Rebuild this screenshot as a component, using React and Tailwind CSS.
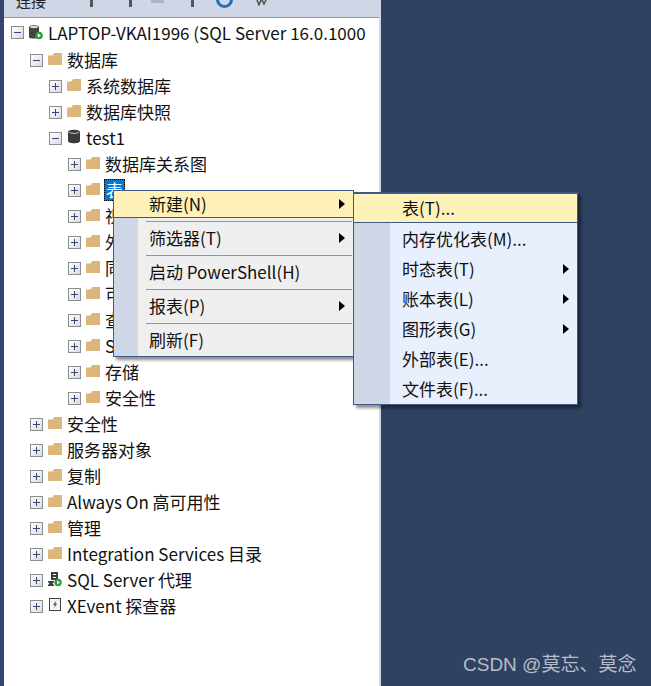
import React from "react";

const FONT = { fontFamily: '"Noto Sans CJK SC", "Open Sans", sans-serif' };

function Expander({ open }) {
  return (
    <span className="w-[13px] h-[13px] shrink-0 border border-[#8d8d8d] bg-gradient-to-br from-white to-[#dcdcdc] relative block">
      <span className="absolute left-[2px] right-[2px] top-[5px] h-px bg-[#2f4a7c]" />
      {!open && <span className="absolute top-[2px] bottom-[2px] left-[5px] w-px bg-[#2f4a7c]" />}
    </span>
  );
}

function Folder() {
  return (
    <svg width="14" height="12" viewBox="0 0 14 12" className="shrink-0 block">
      <path d="M0 2.5 L0 12 L14 12 L14 0 L6 0 L4.5 2.5 Z" fill="#dcb67a" />
    </svg>
  );
}

function Server() {
  return (
    <svg width="16" height="16" viewBox="0 0 16 16" className="shrink-0 block">
      <path d="M1 3 C1 0.5 11 0.5 11 3 L11 13 C11 15 1 15 1 13 Z" fill="#424242" />
      <ellipse cx="6" cy="3" rx="4" ry="1.2" fill="#d8d8d8" />
      <circle cx="11" cy="11.5" r="3.8" fill="#2e9a3c" />
      <path d="M9.8 9.5 L13 11.5 L9.8 13.5 Z" fill="#fff" />
    </svg>
  );
}

function Db() {
  return (
    <svg width="14" height="15" viewBox="0 0 14 15" className="shrink-0 block">
      <path d="M1 3 C1 0 13 0 13 3 L13 12 C13 15 1 15 1 12 Z" fill="#3a3a3a" />
      <path d="M2 3.2 C4 4.8 10 4.8 12 3.2" fill="none" stroke="#e8e8e8" strokeWidth="0.8" />
    </svg>
  );
}

function Agent() {
  return (
    <svg width="14" height="16" viewBox="0 0 14 16" className="shrink-0 block">
      <rect x="3" y="1" width="7" height="8" fill="#3c3c3c" />
      <rect x="5" y="3" width="3" height="1" fill="#fff" />
      <rect x="5" y="6" width="3" height="1" fill="#fff" />
      <path d="M0 10 H6 V11 L4.5 12.5 L6 14 V15 H0 V14 L1.5 12.5 L0 11 Z" fill="#3c3c3c" />
      <circle cx="10" cy="11.5" r="3.7" fill="#2e9a3c" />
      <path d="M9 9.6 L12 11.5 L9 13.4 Z" fill="#fff" />
    </svg>
  );
}

function XEvent() {
  return (
    <svg width="12" height="13" viewBox="0 0 12 13" className="shrink-0 block">
      <rect x="0.5" y="0.5" width="11" height="12" fill="#f4f4f4" stroke="#424242" />
      <path d="M7.5 2.5 L4 6.8 H6 L4.8 10 L8.2 5.8 H6.2 Z" fill="#424242" />
    </svg>
  );
}

function Row({ depth, open, icon, children, selected }) {
  return (
    <div className="h-[26px] flex items-center whitespace-nowrap" style={{ paddingLeft: 7 + depth * 19 }}>
      <Expander open={open} />
      <span className="w-[23px] flex justify-center items-center -mt-[3px] shrink-0">{icon}</span>
      {selected ? (
        <span className="bg-[#0078d7] text-white border border-dotted border-black leading-[20px] h-[22px] px-px">{children}</span>
      ) : (
        <span className="text-[#111] pl-px">{children}</span>
      )}
    </div>
  );
}

function Arrow() {
  return (
    <span className="absolute right-[8px] top-1/2 -translate-y-1/2 w-0 h-0 border-y-[5px] border-y-transparent border-l-[6px] border-l-black" />
  );
}

function MainItem({ label, arrow, hot }) {
  return (
    <div
      className={
        "relative h-[28px] flex items-center pl-[35px] text-[#111] " +
        (hot ? "bg-[#fff2b8] border border-[#3f5a86] -mx-[1px] -mt-[1px] h-[28px]" : "")
      }
    >
      {label}
      {arrow && <Arrow />}
    </div>
  );
}

function MainSep() {
  return <div className="ml-[32px] mr-[1px] h-px bg-[#8a97ab] my-[2.5px]" />;
}

function SubItem({ label, arrow, hot }) {
  return (
    <div
      className={
        "relative h-[30px] flex items-center pl-[48px] text-[#111] " +
        (hot ? "bg-[#fff2b8] border border-[#3f5a86] -mx-[1px] mb-[1px] pl-[47px]" : "")
      }
    >
      {label}
      {arrow && <Arrow />}
    </div>
  );
}

export default function App() {
  return (
    <div className="relative w-[651px] h-[686px] overflow-hidden bg-[#2f4262] text-[17px]" style={FONT}>
      <div className="w-[381px] h-[686px] flex bg-[#cfd6e5]">
        <div className="w-[4px] bg-[#34466f] shrink-0" />
        <div className="flex-1 min-w-0 flex flex-col">
          <div className="h-[17px] shrink-0 relative overflow-hidden text-[15px] text-[#222] leading-none">
            <span className="absolute left-[12px] -top-[7px]">连接</span>
            <span className="absolute left-[86px] top-0 w-[3px] h-[7px] bg-[#555]" />
            <span className="absolute left-[125px] top-0 w-[3px] h-[7px] bg-[#555]" />
            <span className="absolute left-[147px] top-0 w-[13px] h-[3px] bg-[#aeb4c0]" />
            <span className="absolute left-[187px] top-0 w-[3px] h-[7px] bg-[#555]" />
            <span className="absolute left-[212px] -top-[9px] w-[17px] h-[17px] rounded-full border-[3px] border-[#1e6fb5]" />
            <svg width="14" height="6" viewBox="0 0 14 6" className="absolute left-[250px] top-0 block">
              <path d="M3 0 L5 5 L7 0 M8 0 L10 4 L12 0" stroke="#555" strokeWidth="1.6" fill="none" />
            </svg>
          </div>
          <div className="flex-1 bg-white mr-[2px] border-t border-[#8a97ab] overflow-hidden">
            <div className="h-[29px] flex items-center pl-[7px] whitespace-nowrap overflow-hidden">
              <Expander open />
              <span className="w-[24px] flex justify-center shrink-0 -mt-[1px]"><Server /></span>
              <span className="text-[#111]">LAPTOP-VKAI1996 (SQL Server 16.0.1000</span>
            </div>
            <Row depth={1} open icon={<Folder />}>数据库</Row>
            <Row depth={2} icon={<Folder />}>系统数据库</Row>
            <Row depth={2} icon={<Folder />}>数据库快照</Row>
            <Row depth={2} open icon={<Db />}>test1</Row>
            <Row depth={3} icon={<Folder />}>数据库关系图</Row>
            <Row depth={3} icon={<Folder />} selected>表</Row>
            <Row depth={3} icon={<Folder />}>视图</Row>
            <Row depth={3} icon={<Folder />}>外部资源</Row>
            <Row depth={3} icon={<Folder />}>同义词</Row>
            <Row depth={3} icon={<Folder />}>可编程性</Row>
            <Row depth={3} icon={<Folder />}>查询存储</Row>
            <Row depth={3} icon={<Folder />}>Service Broker</Row>
            <Row depth={3} icon={<Folder />}>存储</Row>
            <Row depth={3} icon={<Folder />}>安全性</Row>
            <Row depth={1} icon={<Folder />}>安全性</Row>
            <Row depth={1} icon={<Folder />}>服务器对象</Row>
            <Row depth={1} icon={<Folder />}>复制</Row>
            <Row depth={1} icon={<Folder />}>Always On 高可用性</Row>
            <Row depth={1} icon={<Folder />}>管理</Row>
            <Row depth={1} icon={<Folder />}>Integration Services 目录</Row>
            <Row depth={1} icon={<Agent />}>SQL Server 代理</Row>
            <Row depth={1} icon={<XEvent />}>XEvent 探查器</Row>
          </div>
        </div>
      </div>

      <div className="absolute left-[113px] top-[190px] w-[241px] h-[167px] border border-[#3f5a86] bg-[#efefef] shadow-[3px_3px_3px_rgba(0,0,0,0.45)]">
        <div className="absolute left-0 top-0 bottom-0 w-[24px] bg-[#cfd6e5]" />
        <div className="relative">
          <MainItem label="新建(N)" arrow hot />
          <MainSep />
          <MainItem label="筛选器(T)" arrow />
          <MainSep />
          <MainItem label="启动 PowerShell(H)" />
          <MainSep />
          <MainItem label="报表(P)" arrow />
          <MainSep />
          <MainItem label="刷新(F)" />
        </div>
      </div>

      <div className="absolute left-[353px] top-[192px] w-[225px] h-[213px] border border-[#3f5a86] bg-[#e8effd] shadow-[3px_3px_3px_rgba(0,0,0,0.45)]">
        <div className="absolute left-0 top-0 bottom-0 w-[36px] bg-[#cfd6e5]" />
        <div className="relative">
          <SubItem label="表(T)..." hot />
          <SubItem label="内存优化表(M)..." />
          <SubItem label="时态表(T)" arrow />
          <SubItem label="账本表(L)" arrow />
          <SubItem label="图形表(G)" arrow />
          <SubItem label="外部表(E)..." />
          <SubItem label="文件表(F)..." />
        </div>
      </div>

      <div className="absolute left-[463px] top-[653px] text-[19px] leading-[24px] text-[#b9bec6] whitespace-nowrap" style={{ fontFamily: '"Liberation Sans", "Noto Sans CJK SC", sans-serif' }}>
        CSDN @莫忘、莫念
      </div>
    </div>
  );
}
